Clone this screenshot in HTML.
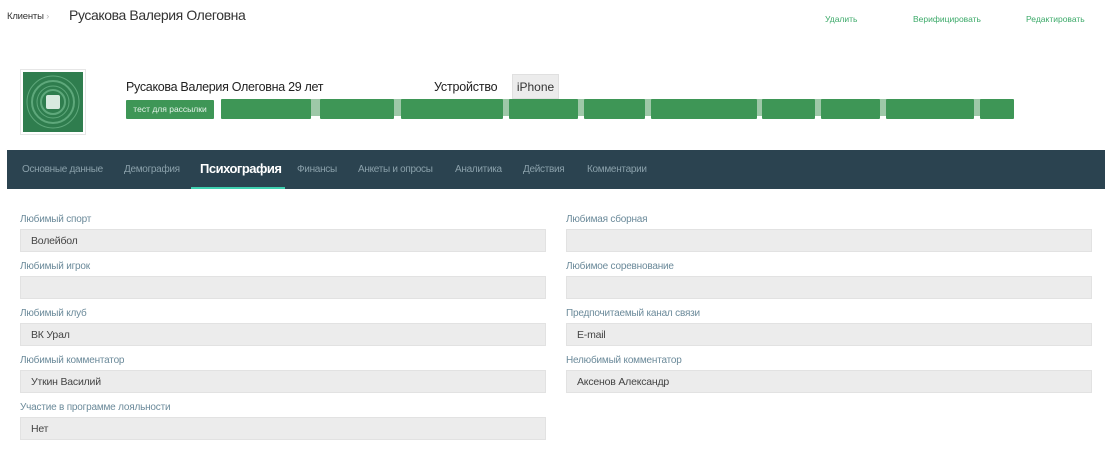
<!DOCTYPE html>
<html><head><meta charset="utf-8"><style>
*{box-sizing:border-box;margin:0;padding:0}
body{width:1110px;height:450px;background:#fff;font-family:"Liberation Sans",sans-serif;position:relative;overflow:hidden;color:#333}
.a{position:absolute;white-space:nowrap}
.lbl{font-size:10px;color:#6b8a9a;letter-spacing:-.2px}
.inp{background:#ececec;border:1px solid #e2e2e2;height:23px;font-size:10.5px;color:#444;padding:0 10px;line-height:22px;letter-spacing:-.2px}
.nav{left:7px;top:150px;width:1098px;height:39px;background:#2b4350}
.nav span{position:absolute;top:14px;font-size:10px;color:#8aa0aa;letter-spacing:-.3px}
.act{font-size:13px!important;color:#fff!important;font-weight:bold;top:11px!important;letter-spacing:-.5px!important}
.seg{position:absolute;top:99px;height:20px;background:#3e9656;border-radius:1px}
.gap{position:absolute;top:99px;height:17px;background:#9ec8a8}
</style></head><body>
<div class="a" style="left:7px;top:11px;font-size:9.5px;color:#333;letter-spacing:-.2px">Клиенты <span style="color:#bbb">›</span></div>
<div class="a" style="left:69px;top:7px;font-size:14px;color:#333;letter-spacing:-.4px">Русакова Валерия Олеговна</div>
<div class="a" style="left:825px;top:14px;font-size:8.5px;color:#3daa6a">Удалить</div>
<div class="a" style="left:913px;top:14px;font-size:8.5px;color:#3daa6a">Верифицировать</div>
<div class="a" style="left:1026px;top:14px;font-size:8.5px;color:#3daa6a">Редактировать</div>

<div class="a" style="left:20px;top:69px;width:66px;height:66px;border:1px solid #e6e6e6;padding:2px">
<svg width="60" height="60" viewBox="0 0 60 60"><rect width="60" height="60" fill="#2f7d4e"/>
<g fill="none" stroke="#7fc59a" stroke-opacity=".6"><circle cx="30" cy="30" r="26"/><circle cx="30" cy="30" r="21" stroke-width="2"/><circle cx="30" cy="30" r="16"/><circle cx="30" cy="30" r="12" stroke-width="2"/></g>
<rect x="23" y="23" width="14" height="14" fill="#d8eadf" rx="2"/></svg></div>

<div class="a" style="left:126px;top:80px;font-size:12.5px;color:#222;letter-spacing:-.3px">Русакова Валерия Олеговна 29 лет</div>
<div class="a" style="left:434px;top:80px;font-size:12.5px;color:#222;letter-spacing:-.2px">Устройство</div>
<div class="a" style="left:512px;top:74px;width:47px;height:25px;background:#ececec;border:1px solid #e0e0e0;font-size:12px;color:#333;line-height:24px;text-align:center">iPhone</div>
<div class="a" style="left:126px;top:100px;width:88px;height:19px;background:#3e9656;color:#e6f3ea;font-size:8.5px;line-height:19px;text-align:center;border-radius:1px">тест для рассылки</div>
<div class="gap" style="left:310px;width:12px"></div><div class="gap" style="left:393px;width:10px"></div><div class="gap" style="left:502px;width:9px"></div><div class="gap" style="left:577px;width:9px"></div><div class="gap" style="left:644px;width:9px"></div><div class="gap" style="left:756px;width:8px"></div><div class="gap" style="left:814px;width:9px"></div><div class="gap" style="left:879px;width:9px"></div><div class="gap" style="left:973px;width:9px"></div>
<div class="seg" style="left:221px;width:90px"></div><div class="seg" style="left:320px;width:74px"></div><div class="seg" style="left:401px;width:102px"></div><div class="seg" style="left:509px;width:69px"></div><div class="seg" style="left:584px;width:61px"></div><div class="seg" style="left:651px;width:106px"></div><div class="seg" style="left:762px;width:53px"></div><div class="seg" style="left:821px;width:59px"></div><div class="seg" style="left:886px;width:88px"></div><div class="seg" style="left:980px;width:34px"></div>

<div class="a nav">
<span style="left:15px">Основные данные</span><span style="left:117px">Демография</span><span class="act" style="left:193px">Психография</span><span style="left:290px">Финансы</span><span style="left:351px">Анкеты и опросы</span><span style="left:448px">Аналитика</span><span style="left:516px">Действия</span><span style="left:580px">Комментарии</span>
<div style="position:absolute;left:184px;top:37px;width:94px;height:2px;background:#3fd0b0"></div>
</div>

<div class="a lbl" style="left:20px;top:214px">Любимый спорт</div>
<div class="a inp" style="left:20px;top:229px;width:526px">Волейбол</div>
<div class="a lbl" style="left:20px;top:261px">Любимый игрок</div>
<div class="a inp" style="left:20px;top:276px;width:526px"></div>
<div class="a lbl" style="left:20px;top:308px">Любимый клуб</div>
<div class="a inp" style="left:20px;top:323px;width:526px">ВК Урал</div>
<div class="a lbl" style="left:20px;top:355px">Любимый комментатор</div>
<div class="a inp" style="left:20px;top:370px;width:526px">Уткин Василий</div>
<div class="a lbl" style="left:20px;top:402px">Участие в программе лояльности</div>
<div class="a inp" style="left:20px;top:417px;width:526px">Нет</div>

<div class="a lbl" style="left:566px;top:214px">Любимая сборная</div>
<div class="a inp" style="left:566px;top:229px;width:526px"></div>
<div class="a lbl" style="left:566px;top:261px">Любимое соревнование</div>
<div class="a inp" style="left:566px;top:276px;width:526px"></div>
<div class="a lbl" style="left:566px;top:308px">Предпочитаемый канал связи</div>
<div class="a inp" style="left:566px;top:323px;width:526px">E-mail</div>
<div class="a lbl" style="left:566px;top:355px">Нелюбимый комментатор</div>
<div class="a inp" style="left:566px;top:370px;width:526px">Аксенов Александр</div>
</body></html>
